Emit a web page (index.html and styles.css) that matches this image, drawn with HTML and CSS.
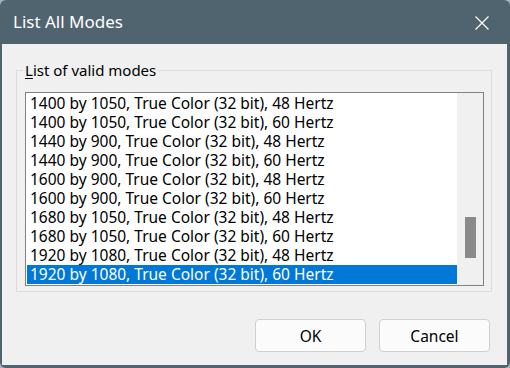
FILE: index.html
```html
<!DOCTYPE html>
<html>
<head>
<meta charset="utf-8">
<link rel="stylesheet" href="styles.css">
</head>
<body>
<div class="window">
  <div class="titlebar">
    <span class="title">List All Modes</span>
    <span class="close">
      <svg width="14" height="14" viewBox="0 0 14 14"><path d="M0.5 0.5 L13.5 13.5 M13.5 0.5 L0.5 13.5" stroke="#fff" stroke-width="1.2" fill="none"/></svg>
    </span>
  </div>
  <div class="client">
    <fieldset class="group">
      <legend class="legend"><u>L</u>ist of valid modes</legend>
      <div class="listbox">
        <div class="items">
          <div class="row">1400 by 1050, True Color (32 bit), 48 Hertz</div>
          <div class="row">1400 by 1050, True Color (32 bit), 60 Hertz</div>
          <div class="row">1440 by 900, True Color (32 bit), 48 Hertz</div>
          <div class="row">1440 by 900, True Color (32 bit), 60 Hertz</div>
          <div class="row">1600 by 900, True Color (32 bit), 48 Hertz</div>
          <div class="row">1600 by 900, True Color (32 bit), 60 Hertz</div>
          <div class="row">1680 by 1050, True Color (32 bit), 48 Hertz</div>
          <div class="row">1680 by 1050, True Color (32 bit), 60 Hertz</div>
          <div class="row">1920 by 1080, True Color (32 bit), 48 Hertz</div>
          <div class="row selected">1920 by 1080, True Color (32 bit), 60 Hertz</div>
        </div>
        <div class="scrollbar"><div class="thumb"></div></div>
      </div>
    </fieldset>
    <div class="buttons">
      <button class="btn">OK</button>
      <button class="btn">Cancel</button>
    </div>
  </div>
</div>
</body>
</html>
```
FILE: styles.css
```css
html, body {
  margin: 0;
  padding: 0;
  background: #aab1b5;
}
.window {
  width: 510px;
  height: 368px;
  box-sizing: border-box;
  background: #506470;
  border-radius: 6px;
  overflow: hidden;
  display: flex;
  flex-direction: column;
  padding: 0 3px 3px 2px;
  font-family: "Noto Sans", "Open Sans", sans-serif;
}
.titlebar {
  height: 44px;
  flex: none;
  display: flex;
  align-items: center;
}
.title {
  color: #fff;
  font-size: 17px;
  padding-left: 11px;
  padding-bottom: 1px;
}
.close {
  margin-left: auto;
  margin-right: 18px;
  width: 14px;
  height: 14px;
  display: flex;
  margin-top: 1px;
}
.client {
  flex: 1;
  background: #f0f0f0;
  padding: 16px 15px 0 14px;
  display: flex;
  flex-direction: column;
}
.group {
  margin: 0;
  border: 1px solid #dcdcdc;
  padding: 12px 7px 5px 8px;
  min-width: 0;
}
.legend {
  font-size: 15px;
  line-height: 20px;
  color: #000;
  padding: 0 2px;
  margin-left: -2px;
}
.legend u {
  text-decoration-thickness: 1px;
  text-underline-offset: 2px;
}
.listbox {
  display: flex;
  border: 1px solid #828282;
  background: #fff;
  height: 192px;
}
.items {
  width: 430px;
  padding: 1px 0 1px 1px;
}
.row {
  height: 19px;
  line-height: 19px;
  font-size: 15.5px;
  padding-left: 3px;
  color: #000;
  white-space: nowrap;
}
.row.selected {
  background: #0078d7;
  color: #fff;
}
.scrollbar {
  flex: 1;
  background: #f0f0f0;
  display: flex;
  flex-direction: column;
  align-items: center;
}
.thumb {
  margin-top: 124px;
  width: 11px;
  height: 41px;
  background: #8a8a8a;
}
.buttons {
  display: flex;
  justify-content: flex-end;
  gap: 13px;
  margin-top: 27px;
  margin-right: 2px;
}
.btn {
  width: 111px;
  height: 33px;
  border: 1px solid #d0d0d0;
  border-radius: 4px;
  background: #fbfbfb;
  font-family: "Noto Sans", "Open Sans", sans-serif;
  font-size: 15.5px;
  color: #000;
  padding: 0;
}
```
